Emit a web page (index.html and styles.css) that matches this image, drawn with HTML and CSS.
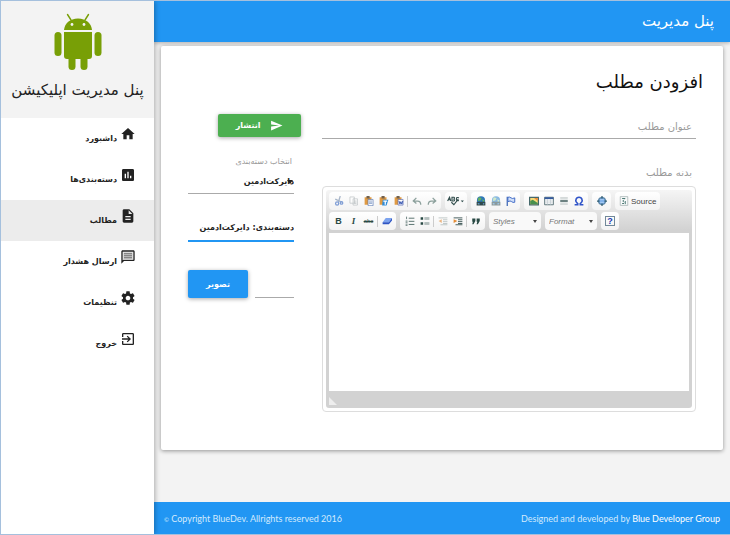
FILE: index.html
```html
<!DOCTYPE html>
<html lang="fa">
<head>
    <meta charset="UTF-8">
    <meta name="viewport" content="width=device-width, initial-scale=1.0">
    <title>پنل مدیریت</title>
    <link rel="stylesheet" href="styles.css">
</head>
<body>
    <aside class="sidebar" dir="rtl">
        <div class="brand">
            <svg class="brand-logo" viewBox="0 0 48 58" fill="#789f06">
                <path d="M10 17C10.500 10.500 16 5.500 24 5.500S37.500 10.500 38 17z"/>
                <path d="M17 7L13.500 1.500M31 7L34.500 1.500" stroke="#789f06" stroke-width="1.400" stroke-linecap="round"/>
                <circle cx="18" cy="11.500" r="1.400" fill="#f3f3f3"/>
                <circle cx="30" cy="11.500" r="1.400" fill="#f3f3f3"/>
                <rect x="0.500" y="19" width="7" height="24" rx="3.500"/>
                <rect x="40.500" y="19" width="7" height="24" rx="3.500"/>
                <path d="M10 19h28v24a3 3 0 0 1-3 3H13a3 3 0 0 1-3-3z"/>
                <rect x="14.500" y="38" width="7" height="19" rx="3.500"/>
                <rect x="26.500" y="38" width="7" height="19" rx="3.500"/>
            </svg>
            <h1 class="brand-name">پنل مدیریت اپلیکیشن</h1>
        </div>
        <nav class="menu">
            <a class="menu-item" href="#">
                <svg class="icon" viewBox="0 0 24 24"><path d="M10 20v-6h4v6h5v-8h3L12 3 2 12h3v8z"/></svg>
                <span>داشبورد</span>
            </a>
            <a class="menu-item" href="#">
                <svg class="icon" viewBox="0 0 24 24"><path d="M19 3H5c-1.100 0-2 .9-2 2v14c0 1.100.9 2 2 2h14c1.100 0 2-.9 2-2V5c0-1.100-.9-2-2-2zM9 17H7v-7h2v7zm4 0h-2V7h2v10zm4 0h-2v-4h2v4z"/></svg>
                <span>دسته‌بندی‌ها</span>
            </a>
            <a class="menu-item active" href="#">
                <svg class="icon" viewBox="0 0 24 24"><path d="M14 2H6c-1.100 0-2 .9-2 2v16c0 1.100.9 2 2 2h12c1.100 0 2-.9 2-2V8l-6-6zm2 16H8v-2h8v2zm0-4H8v-2h8v2zm-3-5V3.500L18.500 9H13z"/></svg>
                <span>مطالب</span>
            </a>
            <a class="menu-item" href="#">
                <svg class="icon" viewBox="0 0 24 24"><path d="M20 2H4c-1.100 0-2 .9-2 2v18l4-4h14c1.100 0 2-.9 2-2V4c0-1.100-.9-2-2-2zm0 14H5l-1 1V4h16v12z"/><path d="M5 5h14v10H5z" opacity=".25"/><path d="M6 6h12v2H6zm0 3h12v2H6zm0 3h12v2H6z" opacity=".4"/></svg>
                <span>ارسال هشدار</span>
            </a>
            <a class="menu-item" href="#">
                <svg class="icon" viewBox="0 0 24 24"><path d="M19.430 12.980c.04-.32.07-.64.07-.98s-.03-.66-.07-.98l2.110-1.650c.19-.15.24-.42.12-.64l-2-3.460c-.12-.22-.39-.3-.61-.22l-2.490 1c-.52-.4-1.080-.73-1.690-.98l-.38-2.650C14.460 2.180 14.250 2 14 2h-4c-.25 0-.46.18-.49.42l-.38 2.650c-.61.25-1.170.59-1.690.98l-2.490-1c-.23-.09-.49 0-.61.22l-2 3.460c-.13.22-.07.49.12.64l2.110 1.650c-.04.32-.07.65-.07.98s.03.66.07.98l-2.110 1.650c-.19.15-.24.42-.12.64l2 3.460c.12.22.39.3.61.22l2.490-1c.52.4 1.080.73 1.690.98l.38 2.650c.03.24.24.42.49.42h4c.25 0 .46-.18.49-.42l.38-2.650c.61-.25 1.170-.59 1.690-.98l2.490 1c.23.09.49 0 .61-.22l2-3.460c.12-.22.07-.49-.12-.64l-2.110-1.650zM12 15.500c-1.930 0-3.500-1.570-3.500-3.500s1.570-3.500 3.500-3.500 3.500 1.570 3.500 3.500-1.570 3.500-3.500 3.500z"/></svg>
                <span>تنظیمات</span>
            </a>
            <a class="menu-item" href="#">
                <svg class="icon" viewBox="0 0 24 24"><path d="M10.090 15.590L11.500 17l5-5-5-5-1.410 1.410L12.670 11H3v2h9.670l-2.580 2.590zM19 3H5c-1.110 0-2 .9-2 2v4h2V5h14v14H5v-4H3v4c0 1.100.89 2 2 2h14c1.100 0 2-.9 2-2V5c0-1.100-.9-2-2-2z"/></svg>
                <span>خروج</span>
            </a>
        </nav>
    </aside>

    <div class="page">
        <header class="topbar" dir="rtl">پنل مدیریت</header>

        <main class="card" dir="rtl">
            <h2 class="card-title">افزودن مطلب</h2>
            <form class="post-form">
                <div class="post-main">
                    <input class="field title-field" type="text" placeholder="عنوان مطلب" aria-label="عنوان مطلب">
                    <label class="body-label" for="postBody">بدنه مطلب</label>

                    <!-- Rich text editor -->
                    <div class="editor" dir="ltr">
                        <div class="editor-inner">
                            <div class="toolbar">
                                <div class="tool-row">
                                    <div class="tool-group">
                                        <button type="button" class="tool faded" aria-label="Cut"><svg viewBox="0 0 16 16" fill="none" stroke="#2f62c0" stroke-width="2"><path d="M10 0L7 10M2 5l11 5" stroke="#7188a8"/><circle cx="5" cy="12" r="2.500"/><circle cx="12" cy="11" r="2"/></svg></button>
                                        <button type="button" class="tool faded" aria-label="Copy"><svg viewBox="0 0 16 16" fill="#fff" stroke="#8a9499"><path d="M1.500 1.500h7v10h-7zM6.500 4.500h7v10h-7z"/><path d="M8 8h4M8 10h4M8 12h4"/></svg></button>
                                        <button type="button" class="tool" aria-label="Paste"><svg viewBox="0 0 16 16"><path d="M1 2h11v12H1z" fill="#e09a42"/><path d="M4 0h5v4H4z" fill="#72604c"/><path d="M6.500 5.500h8v10h-8z" fill="#fff" stroke="#4a6dad"/><path d="M8 8h5M8 10h5M8 12h5" stroke="#6787bd"/></svg></button>
                                        <button type="button" class="tool" aria-label="Paste as text"><svg viewBox="0 0 16 16"><path d="M1 2h11v12H1z" fill="#e09a42"/><path d="M4 0h5v4H4z" fill="#72604c"/><path d="M6 6h9l-3 9H5z" fill="#2e8bd8"/><path d="M7 8h6M10 8v6" stroke="#fff" stroke-width="2"/></svg></button>
                                        <button type="button" class="tool" aria-label="Paste from Word"><svg viewBox="0 0 16 16"><path d="M1 2h11v12H1z" fill="#e09a42"/><path d="M4 0h5v4H4z" fill="#72604c"/><path d="M6.500 5.500h8v9h-8z" fill="#fff" stroke="#4a5fad"/><path d="M8 8l1.500 5 1.500-4 1.500 4L14 8" fill="none" stroke="#3655b0" stroke-width="1.500"/></svg></button>
                                        <span class="tool-separator"></span>
                                        <button type="button" class="tool" aria-label="Undo"><svg viewBox="0 0 16 16" fill="none" stroke="#8ca09c" stroke-width="2"><path d="M7 3L2 8l5 4M3 8h6q5 0 5 6"/></svg></button>
                                        <button type="button" class="tool" aria-label="Redo"><svg viewBox="0 0 16 16" fill="none" stroke="#8ca09c" stroke-width="2"><path d="M9 3l5 5-5 4M13 8H7q-5 0-5 6"/></svg></button>
                                    </div>
                                    <div class="tool-group">
                                        <button type="button" class="tool wide" aria-label="Spell check"><svg viewBox="0 0 28 16" fill="none" stroke="#314d4c" stroke-width="1.800"><path d="M1 8l3-6 2 6M2 6h4M8 2v6h3q2-1 0-3 2-2 0-3zM19 3q-4-2-4 2t4 2M7 10l4 4 7-9"/><path d="M22 7h5l-2.500 3z" fill="#314d4c" stroke="none"/></svg></button>
                                    </div>
                                    <div class="tool-group">
                                        <button type="button" class="tool" aria-label="Link"><svg viewBox="0 0 16 16"><circle cx="8" cy="7" r="6.500" fill="#2f78b7"/><path d="M4 2l5 1-2 4-4 1zM10 5l4 2-3 3z" fill="#69b65a"/><path d="M2 10h5v4H2zM9 10h5v4H9zM6 12h5" fill="none" stroke="#304a4d" stroke-width="2"/></svg></button>
                                        <button type="button" class="tool faded" aria-label="Unlink"><svg viewBox="0 0 16 16"><circle cx="8" cy="7" r="6.500" fill="#3f8ed2"/><path d="M4 2l5 1-2 4-4 1zM10 5l4 2-3 3z" fill="#b5dfaa"/><path d="M2 10h5v4H2zM9 10h5v4H9z" fill="none" stroke="#435e63" stroke-width="2"/></svg></button>
                                        <button type="button" class="tool" aria-label="Anchor"><svg viewBox="0 0 16 16"><path d="M2 1v15" stroke="#3d67b4" stroke-width="2"/><path d="M3 2q3-1 5 1t6 0v7q-3 1-5-1t-6 0z" fill="#cfdef8" stroke="#3c68c5" stroke-width="1.500"/></svg></button>
                                    </div>
                                    <div class="tool-group">
                                        <button type="button" class="tool" aria-label="Image"><svg viewBox="0 0 16 16"><path d="M1 2h14v12H1z" fill="#f6dc79" stroke="#47696c" stroke-width="2"/><path d="M2 13V8l4-2 8 5v2z" fill="#49914e"/><path d="M8 3h6v5z" fill="#f18a3b"/></svg></button>
                                        <button type="button" class="tool" aria-label="Table"><svg viewBox="0 0 16 16"><path d="M1 2h14v12H1z" fill="#fff" stroke="#587075" stroke-width="1.500"/><path d="M1 2h14v3H1z" fill="#355a9e"/><path d="M1 8h14M1 11h14M5.500 5v9M10.500 5v9" stroke="#bac6cb"/></svg></button>
                                        <button type="button" class="tool" aria-label="Horizontal line"><svg viewBox="0 0 16 16"><path d="M2 2h12v12H2z" fill="#e4e8e8"/><path d="M2 8h12" stroke="#4b6465" stroke-width="2.500"/><path d="M2 3h12M2 13h12" stroke="#b5bebe"/></svg></button>
                                        <button type="button" class="tool" aria-label="Special character"><svg viewBox="0 0 16 16" fill="none" stroke="#3155c9" stroke-width="2.500"><path d="M1 14h5v-2Q2 9 3 6q1-4 5-4t5 4q1 3-3 6v2h5"/></svg></button>
                                    </div>
                                    <div class="tool-group">
                                        <button type="button" class="tool" aria-label="Show blocks"><svg viewBox="0 0 16 16"><circle cx="8" cy="8" r="5.500" fill="#74a9e8" stroke="#5e87a6" stroke-width="2"/><path d="M8 0v4M8 12v4M0 8h4M12 8h4" stroke="#315c70" stroke-width="2"/><path d="M5 6h6M5 10h6" stroke="#d8eafc"/></svg></button>
                                    </div>
                                    <div class="tool-group">
                                        <button type="button" class="tool source"><svg viewBox="0 0 16 16"><path d="M2 1h12v14H2z" fill="#f8fafa" stroke="#93a3a3"/><path d="M5 4h5M8 6l-2 2 2 2M10 8v5M5 12h3" fill="none" stroke="#41706b" stroke-width="1.500"/></svg>Source</button>
                                    </div>
                                </div>
                                <div class="tool-row">
                                    <div class="tool-group">
                                        <button type="button" class="tool glyph bold">B</button>
                                        <button type="button" class="tool glyph italic">I</button>
                                        <button type="button" class="tool glyph strike">abc</button>
                                        <span class="tool-separator"></span>
                                        <button type="button" class="tool" aria-label="Remove format"><svg viewBox="0 0 16 16"><path d="M6 3h10l-5 7H1z" fill="#7ca3ee"/><path d="M1 10h10l5-7v4l-5 6H1z" fill="#2e55c4"/></svg></button>
                                    </div>
                                    <div class="tool-group">
                                        <button type="button" class="tool" aria-label="Numbered list"><svg viewBox="0 0 16 16" stroke="#526d6a"><path d="M2.500 1v4M1 8h3M1 10h3M1 13h3M1 15h3" stroke-width="1.300"/><path d="M6 3.500h9M6 8.500h9M6 13.500h9" stroke-width="1.500"/></svg></button>
                                        <button type="button" class="tool" aria-label="Bulleted list"><svg viewBox="0 0 16 16"><path d="M1 2h4v4H1zM1 10h4v4H1z" fill="#294944"/><path d="M7 3h8M7 5h8M7 11h8M7 13h8" stroke="#526d6a"/></svg></button>
                                        <span class="tool-separator"></span>
                                        <button type="button" class="tool faded" aria-label="Decrease indent"><svg viewBox="0 0 16 16"><path d="M1 3h14M8 6h7M8 9h7M8 12h7M4 14h11" stroke="#6a7f7d"/><path d="M6 5v6L1 8z" fill="#e38b34"/></svg></button>
                                        <button type="button" class="tool" aria-label="Increase indent"><svg viewBox="0 0 16 16"><path d="M1 3h14M8 6h7M8 9h7M8 12h7M4 14h11" stroke="#405957" stroke-width="1.500"/><path d="M1 5v6l6-3z" fill="#e38b34"/></svg></button>
                                        <span class="tool-separator"></span>
                                        <button type="button" class="tool" aria-label="Block quote"><svg viewBox="0 0 16 16" fill="#294944"><path d="M2 4h5v4l-3 5H2l1-4H2zM9 4h5v4l-3 5H9l1-4H9z"/></svg></button>
                                    </div>
                                    <select class="tool-select" aria-label="Styles"><option>Styles</option></select>
                                    <select class="tool-select" aria-label="Format"><option>Format</option></select>
                                    <div class="tool-group">
                                        <button type="button" class="tool glyph about">?</button>
                                    </div>
                                </div>
                            </div>
                            <textarea class="editor-body" id="postBody"></textarea>
                            <div class="editor-bottom"><span class="resizer"></span></div>
                        </div>
                    </div>
                </div>

                <div class="post-side">
                    <button class="btn btn-publish" type="submit">
                        <svg class="send-icon" viewBox="0 0 24 24"><path d="M2 21l21-9L2 3v7l15 2-15 2z"/></svg>
                        انتشار
                    </button>
                    <label class="small-label" for="category">انتخاب دسته‌بندی</label>
                    <div class="select-wrap">
                        <select class="field" id="category"><option>دایرکت‌ادمین</option></select>
                    </div>
                    <input class="field focused" type="text" value="دسته‌بندی: دایرکت‌ادمین" aria-label="دسته‌بندی">
                    <div class="file-row">
                        <input class="field file-path" type="text" aria-label="نام تصویر">
                        <button class="btn btn-image" type="button">تصویر</button>
                    </div>
                </div>
            </form>
        </main>

        <footer class="footer">
            <span><span class="copy-sign">©</span> Copyright BlueDev. Allrights reserved 2016</span>
            <span>Designed and developed by <a href="#">Blue Developer Group</a></span>
        </footer>
    </div>
</body>
</html>
```
FILE: styles.css
```css
* {
    box-sizing: border-box;
}

body {
    margin: 0;
    min-height: 100vh;
    display: flex;
    background-color: #f3f3f3;
    border: 1px solid #a5c0dd;
    border-right: none;
    font-family: "DejaVu Sans", sans-serif;
    font-size: 10px;
    color: #222;
}

button, input, select, textarea {
    font-family: inherit;
    font-size: inherit;
    color: inherit;
    margin: 0;
}

/* === SIDEBAR === */
.sidebar {
    width: 153px;
    flex-shrink: 0;
    background-color: white;
    box-shadow: 1px 0 5px rgba(0,0,0,0.3);
    z-index: 2;
}

.brand {
    height: 117px;
    padding-top: 12px;
    background-color: #f3f3f3;
    text-align: center;
}

.brand-logo {
    display: block;
    width: 48px;
    height: 58px;
    margin: 0 auto;
}

.brand-name {
    margin: 6px 0 0;
    font-size: 15px;
    line-height: 26px;
    font-weight: normal;
    white-space: nowrap;
}

.menu-item {
    display: flex;
    height: 41px;
    padding: 8px 18px 0 0;
    gap: 3px;
    color: #222;
    font-size: 8px;
    font-weight: bold;
    line-height: 26px;
    text-decoration: none;
}

.menu-item.active {
    background-color: #ececec;
}

.icon {
    width: 16px;
    height: 16px;
    fill: #222;
}

/* === PAGE === */
.page {
    flex: 1;
    min-width: 0;
    display: flex;
    flex-direction: column;
}

.topbar {
    height: 41px;
    padding: 0 16px;
    background-color: #2196f3;
    box-shadow: 0 1px 4px rgba(0,0,0,0.3);
    color: white;
    font-size: 15px;
    line-height: 40px;
}

.card {
    margin: 4px 7px 52px;
    padding: 20px 20px 38px;
    background-color: white;
    border-radius: 2px;
    box-shadow: 0 1px 4px rgba(0,0,0,0.4);
}

.card-title {
    margin: 0;
    font-size: 18px;
    line-height: 32px;
    font-weight: normal;
    color: #111;
}

.post-form {
    display: grid;
    grid-template-columns: 374fr 113fr;
    gap: 21px;
    padding: 16px 7px 0;
}

.post-main,
.post-side {
    min-width: 0;
}

.field {
    display: block;
    width: 100%;
    height: 25px;
    padding: 0;
    border: none;
    border-bottom: 1px solid #aaa;
    border-radius: 0;
    background: none;
    outline: none;
}

.title-field {
    padding: 0 4px;
}

.title-field::placeholder {
    color: #999;
}

.body-label {
    display: block;
    margin: 24px 0 3px;
    padding: 0 4px;
    line-height: 20px;
    color: #999;
}

/* === EDITOR === */
.editor {
    padding: 3px;
    border: 1px solid #ddd;
    border-radius: 4px;
    background-color: white;
}

.editor-inner {
    padding: 2px 3px 0;
    border-radius: 3px;
    background: linear-gradient(#f5f5f5, #d2d2d2 40px);
}

.toolbar {
    padding-bottom: 1px;
}

.tool-row {
    display: flex;
    gap: 4px;
    margin-bottom: 2px;
}

.tool-group {
    display: flex;
    align-items: center;
    height: 18px;
    padding: 0 2px;
    border-radius: 4px;
    background: linear-gradient(#fff, #f3f3f3);
}

.tool {
    display: flex;
    align-items: center;
    justify-content: center;
    width: 15px;
    height: 16px;
    padding: 0;
    border: none;
    background: none;
    cursor: pointer;
}

.tool svg {
    flex-shrink: 0;
    height: 10px;
}

.tool.faded {
    opacity: 0.6;
}

.tool.wide {
    width: 18px;
}

.tool.source {
    width: auto;
    padding: 0 2px;
    gap: 2px;
    color: #444;
    font-family: "Liberation Sans", sans-serif;
    font-size: 8px;
}

.tool-separator {
    width: 1px;
    height: 11px;
    margin: 0 1px;
    background-color: #ccc;
}

.tool.glyph {
    font-family: "Liberation Sans", sans-serif;
    font-size: 9px;
    font-weight: bold;
    color: #294944;
}

.tool.italic {
    font-family: "Liberation Serif", serif;
    font-style: italic;
}

.tool.strike {
    font-size: 6px;
    font-weight: normal;
    text-decoration: line-through;
}

.tool.about {
    width: 10px;
    height: 10px;
    margin: 0 2px;
    border: 1px solid #718899;
    color: #2038b0;
}

.tool-select {
    appearance: none;
    width: 52px;
    height: 18px;
    padding: 0 4px;
    border: none;
    border-radius: 4px;
    background: #f9f9f9 url("data:image/svg+xml,%3Csvg xmlns='http://www.w3.org/2000/svg' viewBox='0 0 4 3'%3E%3Cpath d='M0 0h4L2 3z' fill='%23444'/%3E%3C/svg%3E") right 4px center / 4px 3px no-repeat;
    color: #777;
    font-family: "Liberation Sans", sans-serif;
    font-size: 8px;
    font-style: italic;
}

.editor-body {
    display: block;
    width: 100%;
    height: 158px;
    padding: 8px;
    border: none;
    background-color: white;
    outline: none;
    resize: none;
}

.editor-bottom {
    display: flex;
    align-items: flex-end;
    height: 17px;
    padding-bottom: 3px;
}

.resizer {
    border-left: 8px solid #eee;
    border-top: 8px solid transparent;
}

/* === SIDE FIELDS === */
.post-side {
    font-size: 8px;
}

.post-side .field {
    font-weight: bold;
}

.btn {
    display: flex;
    align-items: center;
    justify-content: center;
    border: none;
    border-radius: 2px;
    box-shadow: 0 1px 4px rgba(0,0,0,0.35);
    color: white;
    font-size: 8px;
    font-weight: bold;
    cursor: pointer;
}

.btn-publish {
    width: 83px;
    height: 23px;
    gap: 10px;
    background-color: #4caf50;
}

.send-icon {
    width: 13px;
    height: 13px;
    fill: white;
}

.small-label {
    display: block;
    margin-top: 18px;
    padding-right: 9px;
    line-height: 14px;
    color: #999;
}

.select-wrap,
.post-side > .field,
.file-row {
    width: auto;
    margin-right: 7px;
}

.select-wrap {
    position: relative;
}

.select-wrap .field {
    appearance: none;
}

/* Caret over the start of the select */
.select-wrap::after {
    content: "";
    position: absolute;
    top: 11px;
    right: 1px;
    border: 3px solid transparent;
    border-top: 4px solid #222;
    border-bottom: none;
    pointer-events: none;
}

.post-side > .field.focused {
    width: calc(100% - 7px);
    height: 27px;
    margin-top: 21px;
    border-bottom: 2px solid #2196f3;
}

.file-row {
    display: flex;
    align-items: flex-end;
    gap: 7px;
    margin-top: 28px;
}

.file-path {
    flex: 1;
    min-width: 0;
}

.btn-image {
    width: 60px;
    height: 28px;
    background-color: #2196f3;
}

/* === FOOTER === */
.footer {
    display: flex;
    align-items: center;
    justify-content: space-between;
    height: 32px;
    margin-top: auto;
    padding: 0 10px;
    background-color: #2196f3;
    color: #d3eafd;
    font-family: Lato, sans-serif;
    font-size: 9px;
}

.copy-sign {
    font-size: 6px;
}

.footer a {
    color: white;
    text-decoration: none;
}
```
